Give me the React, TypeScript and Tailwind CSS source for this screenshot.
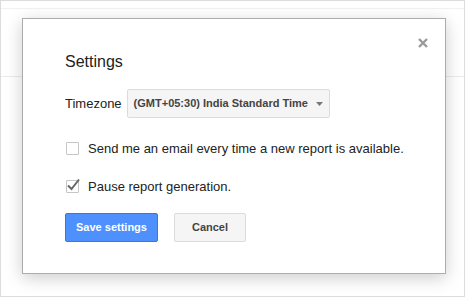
export default function App() {
  return (
    <div
      className="relative h-[297px] w-[465px] overflow-hidden border border-[#dcdcdc] bg-white"
      style={{ fontFamily: "'Liberation Sans', Arial, sans-serif" }}
    >
      {/* page behind the dialog */}
      <div className="h-[8px] border-b border-[#f1f1f1]" />
      <div className="h-[68px] border-b border-[#ebebeb]" />

      {/* dialog */}
      <div className="absolute left-[21px] top-[17px] h-[256px] w-[424px] border border-[#acacac] bg-white pl-[42px] pr-[43px] pt-[33px] shadow-[0_4px_16px_rgba(0,0,0,0.2)]">
        <button className="absolute right-[17px] top-[19px] h-[10px] w-[10px]">
          <svg viewBox="0 0 10 10" className="h-[10px] w-[10px]">
            <path d="M1 1L9 9M9 1L1 9" stroke="#9a9a9a" strokeWidth="2.4" />
          </svg>
        </button>

        <h2 className="text-[16px] leading-[20px] text-[#222]">Settings</h2>

        <div className="mt-[17px] flex items-center gap-[5px]">
          <span className="text-[13px] text-[#222]">Timezone</span>
          <div className="flex h-[29px] w-[203px] items-center justify-between rounded-[2px] border border-[#dcdcdc] bg-[#f5f5f5] pl-[6px] pr-[6px]">
            <span className="whitespace-nowrap text-[11px] font-bold text-[#444]">(GMT+05:30) India Standard Time</span>
            <svg viewBox="0 0 7 4" className="h-[4px] w-[7px]">
              <path d="M0 0H7L3.5 4Z" fill="#777" />
            </svg>
          </div>
        </div>

        <label className="mt-[21px] flex items-center gap-[9px]">
          <span className="ml-px h-[13px] w-[13px] shrink-0 rounded-[1px] border border-[#c6c6c6] bg-white" />
          <span className="whitespace-nowrap text-[13px] text-[#222]">Send me an email every time a new report is available.</span>
        </label>

        <label className="mt-[18px] flex items-center gap-[9px]">
          <span className="relative ml-px h-[13px] w-[13px] shrink-0 rounded-[1px] border border-[#c6c6c6] bg-white">
            <svg viewBox="0 0 15 15" className="absolute left-[-1px] top-[-4px] h-[15px] w-[15px]">
              <path d="M2 8.5L5.5 12L13 2.5" stroke="#666" strokeWidth="2" fill="none" />
            </svg>
          </span>
          <span className="whitespace-nowrap text-[13px] text-[#222]">Pause report generation.</span>
        </label>

        <div className="mt-[17px] flex gap-[16px]">
          <button className="h-[29px] w-[93px] rounded-[2px] border border-[#3079ed] bg-[#4d90fe] text-[11px] font-bold text-white">
            Save settings
          </button>
          <button className="h-[29px] w-[72px] rounded-[2px] border border-[#dcdcdc] bg-[#f5f5f5] text-[11px] font-bold text-[#444]">
            Cancel
          </button>
        </div>
      </div>
    </div>
  );
}
